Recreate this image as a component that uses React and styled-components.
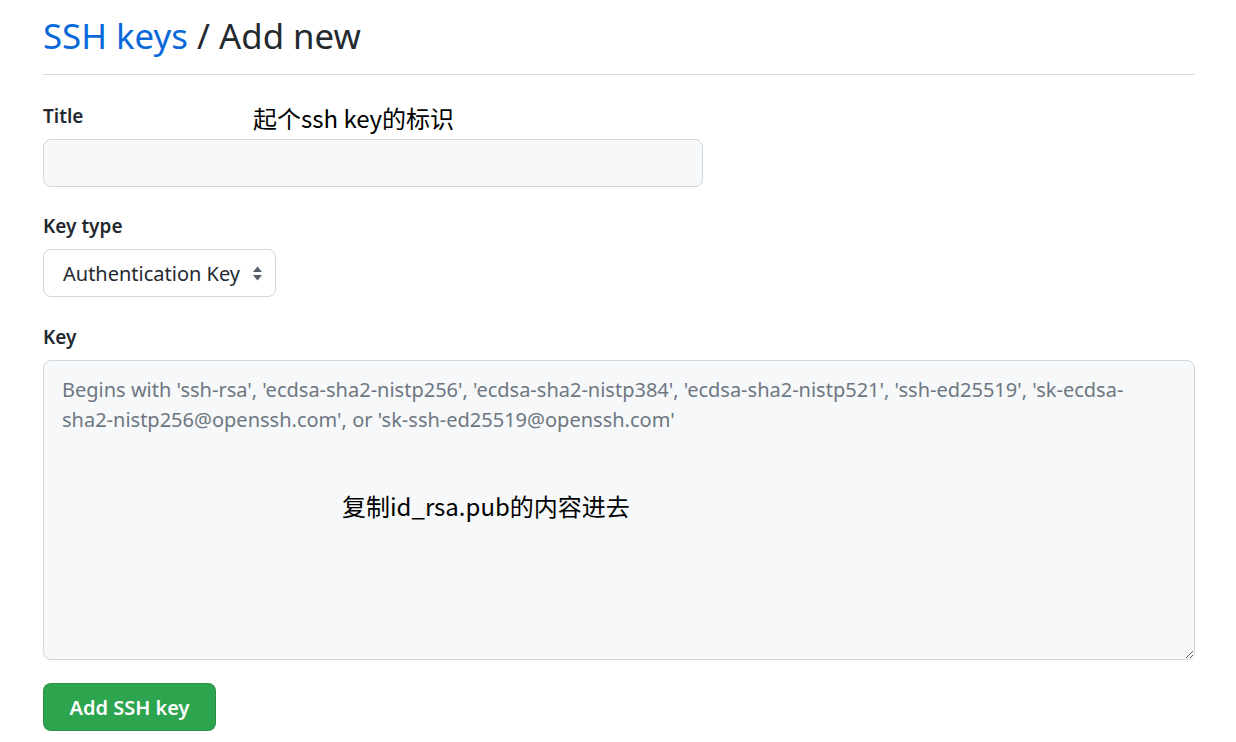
import React from "react";
import styled, { createGlobalStyle } from "styled-components";

const Global = createGlobalStyle`
  body {
    margin: 0;
    background: #fff;
    font-family: "Noto Sans", "Open Sans", "Noto Sans CJK SC", sans-serif;
    color: #24292f;
  }
`;

const Page = styled.div`
  width: 1152px;
  padding: 12px 0 0 43px;
`;

const Header = styled.h2`
  margin: 0;
  padding-bottom: 14px;
  border-bottom: 1px solid #d8dee4;
  font-size: 34.8px;
  font-weight: 400;
  line-height: 48px;
  color: #24292f;
`;

const Crumb = styled.a`
  color: #0969da;
  text-decoration: none;
`;

const Form = styled.form`
  position: relative;
  padding-top: 25px;
`;

const Group = styled.div`
  display: flex;
  flex-direction: column;
  align-items: flex-start;
  margin-bottom: ${(p) => p.gap || 23}px;
`;

const LabelRow = styled.div`
  position: relative;
  height: 32px;
  margin-bottom: 7px;
  display: flex;
  align-items: center;
`;

const Label = styled.label`
  font-size: 19px;
  font-weight: 600;
  color: #24292f;
`;

const Note = styled.span`
  position: absolute;
  left: ${(p) => p.left}px;
  top: ${(p) => p.top}px;
  font-family: "Noto Sans CJK SC", "Noto Sans", sans-serif;
  font-size: 24px;
  line-height: 32px;
  color: #000;
  white-space: nowrap;
`;

const Input = styled.input`
  box-sizing: border-box;
  width: 660px;
  height: 48px;
  background: #f6f8fa;
  border: 1px solid #d0d7de;
  border-radius: 8px;
  font: inherit;
  font-size: 20px;
  padding: 0 18px;
`;

const SelectBox = styled.div`
  box-sizing: border-box;
  width: 233px;
  height: 48px;
  display: flex;
  align-items: center;
  justify-content: space-between;
  padding: 0 12px 0 19px;
  background: #fff;
  border: 1px solid #d0d7de;
  border-radius: 8px;
  font-size: 20px;
  color: #24292f;
`;

const TextArea = styled.textarea`
  box-sizing: border-box;
  width: 1152px;
  height: 300px;
  background: #f6f8fa;
  border: 1px solid #d0d7de;
  border-radius: 8px;
  padding: 14px 28px 14px 18px;
  font: inherit;
  font-size: 20px;
  line-height: 30px;
  color: #24292f;
  resize: vertical;
  &::placeholder {
    color: #6e7781;
  }
`;

const Button = styled.button`
  width: 173px;
  height: 48px;
  background: #2da44e;
  border: 1px solid rgba(27, 31, 36, 0.15);
  border-radius: 8px;
  color: #fff;
  font: inherit;
  font-size: 20px;
  font-weight: 600;
`;

function Arrows() {
  return (
    <svg width="11" height="17" viewBox="0 0 11 17">
      <path d="M5.5 1.5 L10 7 H1 Z" fill="#57606a" />
      <path d="M5.5 15.5 L10 10 H1 Z" fill="#57606a" />
    </svg>
  );
}

export default function App() {
  return (
    <>
      <Global />
      <Page>
        <Header>
          <Crumb href="#">SSH keys</Crumb> / Add new
        </Header>
        <Form onSubmit={(e) => e.preventDefault()}>
          <Group>
            <LabelRow>
              <Label>Title</Label>
              <Note left={210} top={2}>
                起个ssh key的标识
              </Note>
            </LabelRow>
            <Input type="text" />
          </Group>
          <Group gap={24}>
            <LabelRow>
              <Label>Key type</Label>
            </LabelRow>
            <SelectBox>
              Authentication Key
              <Arrows />
            </SelectBox>
          </Group>
          <Group gap={23}>
            <LabelRow>
              <Label>Key</Label>
            </LabelRow>
            <TextArea placeholder="Begins with 'ssh-rsa', 'ecdsa-sha2-nistp256', 'ecdsa-sha2-nistp384', 'ecdsa-sha2-nistp521', 'ssh-ed25519', 'sk-ecdsa-sha2-nistp256@openssh.com', or 'sk-ssh-ed25519@openssh.com'" />
          </Group>
          <Note left={299} top={415}>
            复制id_rsa.pub的内容进去
          </Note>
          <Button type="submit">Add SSH key</Button>
        </Form>
      </Page>
    </>
  );
}
